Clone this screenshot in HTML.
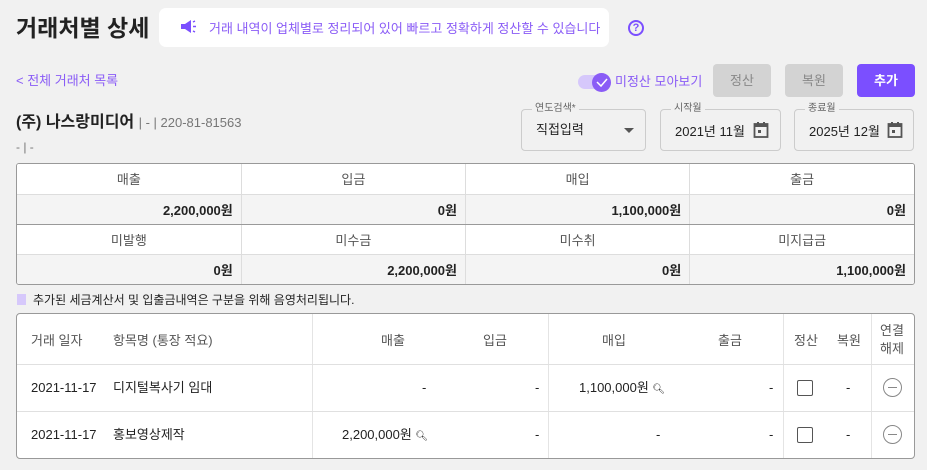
<!DOCTYPE html><html><head><meta charset="utf-8"><style>
*{box-sizing:border-box;margin:0;padding:0}
body{width:927px;height:470px;background:#f1f1f1;font-family:"Liberation Sans","Noto Sans CJK KR",sans-serif;color:#222;position:relative;overflow:hidden}
.a{position:absolute}
.t{font-size:13px;line-height:16px}
table{border-collapse:collapse}
.sumw{left:16px;top:163px;width:899px;height:122px;border:1px solid #999;border-radius:3px;overflow:hidden;background:#fff}
.sum{width:100%}
.sum td{width:25%;height:30px;border:1px solid #ddd;font-size:13px}
.sum tr:first-child td{border-top:none}
.sum td:first-child{border-left:none}
.sum td:last-child{border-right:none}
.sum tr.h td{text-align:center;color:#555;background:#fff}
.sum tr.v td{text-align:right;font-weight:bold;background:#f4f4f4;padding-right:8px}
.sum tr.v2 td{border-bottom:1px solid #999}
.fld{border:1px solid #ccc;border-radius:4px;height:42px;background:transparent}
.fld .lb{position:absolute;top:-8px;left:10px;font-size:10px;color:#666;background:#f1f1f1;padding:0 3px;line-height:14px}
.main{left:16px;top:313px;width:899px;height:146px;border:1px solid #999;border-radius:4px;background:#fff;overflow:hidden}
.vl{position:absolute;top:0;bottom:0;width:1px;background:#e4e4e4}
.hl{position:absolute;left:0;right:0;height:1px;background:#e0e0e0}
.c{position:absolute;font-size:13px;color:#222;line-height:16px}
.g{color:#555}
.cb{position:absolute;width:16px;height:16px;border:1.5px solid #555;border-radius:2px}
.mn{position:absolute;width:19px;height:19px;border:1.5px solid #888;border-radius:50%}
.mn:after{content:"";position:absolute;left:4px;right:4px;top:7.5px;height:1.5px;background:#888}
</style></head><body>
<div class="a" style="left:16px;top:13px;font-size:23px;font-weight:bold;color:#222;line-height:30px">거래처별 상세</div>
<div class="a" style="left:159px;top:8px;width:450px;height:39px;background:#fff;border-radius:7px"></div>
<svg class="a" style="left:180px;top:20px" width="17" height="14" viewBox="0 0 17 14"><path d="M1 4h4l6-4v13l-6-4H1z" fill="#7b4fff"/><path d="M13 2l2-1M13 6.5h3M13 11l2 1" stroke="#7b4fff" stroke-width="1.5"/></svg>
<div class="a t" style="left:209px;top:21px;color:#8a5cf6">거래 내역이 업체별로 정리되어 있어 빠르고 정확하게 정산할 수 있습니다</div>
<div class="a" style="left:628px;top:20px;width:16px;height:16px;border:2px solid #7b4fff;border-radius:50%;font-size:11px;font-weight:bold;color:#7b4fff;text-align:center;line-height:12px">?</div>
<div class="a t" style="left:16px;top:73px;color:#8a5cf6">&lt; 전체 거래처 목록</div>
<div class="a" style="left:578px;top:75px;width:30px;height:14px;background:#d6c8fb;border-radius:7px"></div>
<div class="a" style="left:592px;top:73px;width:19px;height:19px;background:#8a5cf6;border-radius:50%"></div>
<svg class="a" style="left:596px;top:77px" width="12" height="11"><path d="M1 5l4 4 6-7" stroke="#fff" stroke-width="1.5" fill="none"/></svg>
<div class="a t" style="left:615px;top:74px;color:#8a5cf6">미정산 모아보기</div>
<div class="a" style="left:713px;top:64px;width:58px;height:33px;background:#d3d3d3;border-radius:4px;color:#888;font-size:13px;text-align:center;line-height:33px">정산</div>
<div class="a" style="left:785px;top:64px;width:58px;height:33px;background:#d3d3d3;border-radius:4px;color:#888;font-size:13px;text-align:center;line-height:33px">복원</div>
<div class="a" style="left:857px;top:64px;width:58px;height:33px;background:#7b4fff;border-radius:4px;color:#fff;font-size:13px;font-weight:bold;text-align:center;line-height:33px">추가</div>
<div class="a" style="left:16px;top:113px;font-size:16px;font-weight:bold;line-height:20px">(주) 나스랑미디어 <span style="font-size:13px;font-weight:normal;color:#777">| - | 220-81-81563</span></div>
<div class="a" style="left:16px;top:140px;font-size:12px;color:#777;line-height:14px">- | -</div>
<div class="a fld" style="left:521px;top:109px;width:125px"><span class="lb">연도검색*</span><div class="a t" style="left:14px;top:12px">직접입력</div><div class="a" style="left:102px;top:18px;border:5px solid transparent;border-top-color:#555"></div></div>
<div class="a fld" style="left:660px;top:109px;width:121px"><span class="lb">시작월</span><div class="a t" style="left:14px;top:14px">2021년 11월</div><svg class="a" style="left:92px;top:11px" width="16" height="18"><rect x="1.5" y="3" width="13" height="13" fill="none" stroke="#555" stroke-width="1.8"/><rect x="1.5" y="3" width="13" height="3" fill="#555"/><rect x="4" y="1" width="2" height="3" fill="#555"/><rect x="10" y="1" width="2" height="3" fill="#555"/><rect x="5" y="9" width="3" height="3" fill="#555"/></svg></div>
<div class="a fld" style="left:794px;top:109px;width:120px"><span class="lb">종료월</span><div class="a t" style="left:14px;top:14px">2025년 12월</div><svg class="a" style="left:92px;top:11px" width="16" height="18"><rect x="1.5" y="3" width="13" height="13" fill="none" stroke="#555" stroke-width="1.8"/><rect x="1.5" y="3" width="13" height="3" fill="#555"/><rect x="4" y="1" width="2" height="3" fill="#555"/><rect x="10" y="1" width="2" height="3" fill="#555"/><rect x="5" y="9" width="3" height="3" fill="#555"/></svg></div>
<div class="a sumw"><table class="sum">
<tr class="h"><td>매출</td><td>입금</td><td>매입</td><td>출금</td></tr>
<tr class="v v2"><td>2,200,000원</td><td>0원</td><td>1,100,000원</td><td>0원</td></tr>
<tr class="h"><td>미발행</td><td>미수금</td><td>미수취</td><td>미지급금</td></tr>
<tr class="v"><td>0원</td><td>2,200,000원</td><td>0원</td><td>1,100,000원</td></tr>
</table></div>
<div class="a" style="left:17px;top:294px;width:9px;height:11px;background:#d6c8fb"></div>
<div class="a" style="left:33px;top:292px;font-size:12px;line-height:16px">추가된 세금계산서 및 입출금내역은 구분을 위해 음영처리됩니다.</div>
<div class="a main">
<div class="vl" style="left:295px"></div><div class="vl" style="left:531px"></div><div class="vl" style="left:766px"></div><div class="vl" style="left:854px"></div>
<div class="hl" style="top:50px"></div><div class="hl" style="top:97px"></div>
<div class="c g" style="left:14px;top:19px">거래 일자</div>
<div class="c g" style="left:96px;top:19px">항목명 (통장 적요)</div>
<div class="c g" style="left:364px;top:19px">매출</div>
<div class="c g" style="left:466px;top:19px">입금</div>
<div class="c g" style="left:585px;top:19px">매입</div>
<div class="c g" style="left:701px;top:19px">출금</div>
<div class="c g" style="left:777px;top:19px">정산</div>
<div class="c g" style="left:820px;top:19px">복원</div>
<div class="c g" style="left:863px;top:8px;line-height:18px">연결<br>해제</div>
<div class="c" style="left:14px;top:66px">2021-11-17</div>
<div class="c" style="left:96px;top:66px">디지털복사기 임대</div>
<div class="c" style="left:405px;top:66px">-</div>
<div class="c" style="left:518px;top:66px">-</div>
<div class="c" style="left:562px;top:66px">1,100,000원 <span style="font-size:10px">&#x1F50D;&#xFE0E;</span></div>
<div class="c" style="left:752px;top:66px">-</div>
<div class="cb" style="left:780px;top:66px"></div>
<div class="c" style="left:829px;top:66px">-</div>
<div class="mn" style="left:866px;top:64px"></div>
<div class="c" style="left:14px;top:113px">2021-11-17</div>
<div class="c" style="left:96px;top:113px">홍보영상제작</div>
<div class="c" style="left:325px;top:113px">2,200,000원 <span style="font-size:10px">&#x1F50D;&#xFE0E;</span></div>
<div class="c" style="left:518px;top:113px">-</div>
<div class="c" style="left:639px;top:113px">-</div>
<div class="c" style="left:752px;top:113px">-</div>
<div class="cb" style="left:780px;top:113px"></div>
<div class="c" style="left:829px;top:113px">-</div>
<div class="mn" style="left:866px;top:111px"></div>
</div>
</body></html>
